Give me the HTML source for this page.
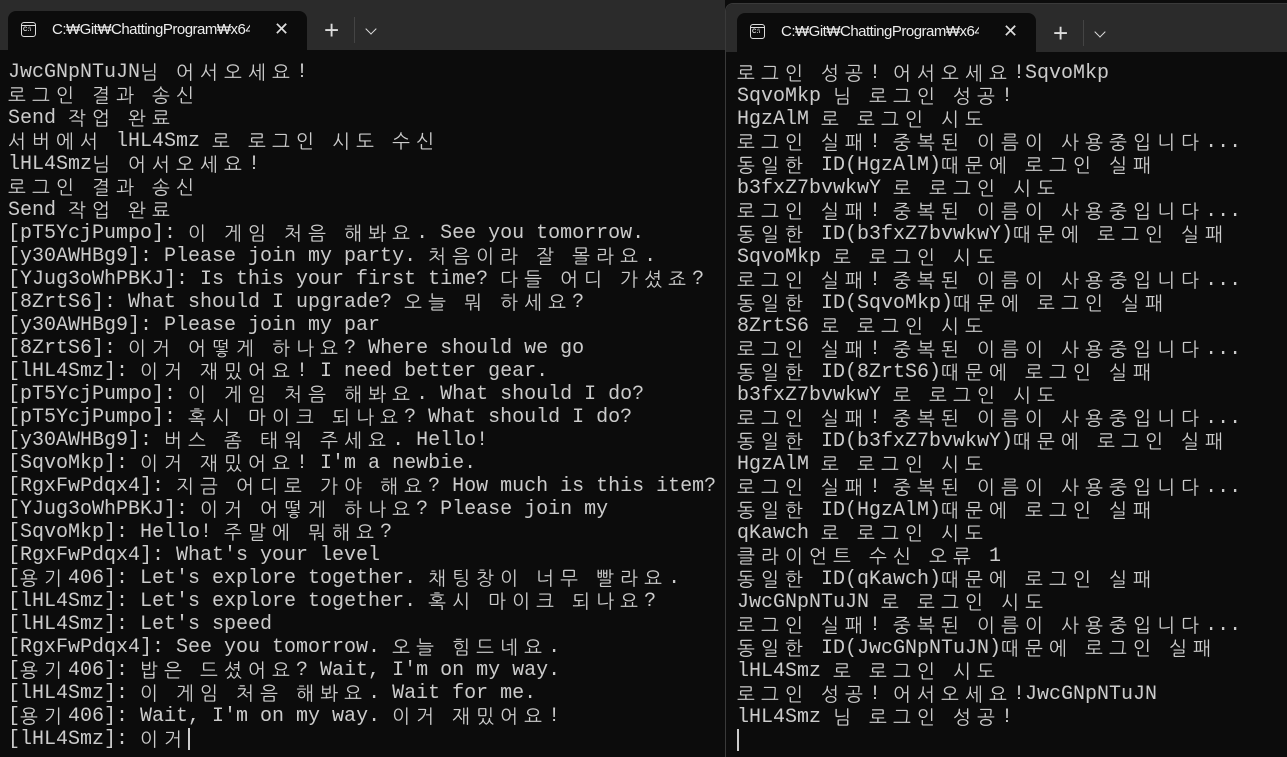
<!DOCTYPE html>
<html><head><meta charset="utf-8"><style>
html,body{margin:0;width:1287px;height:756px;overflow:hidden;background:#0c0c0c;}
.win{position:absolute;background:#0c0c0c;overflow:hidden;}
.bar{position:absolute;left:0;right:0;top:0;background:#2b2b2b;}
.tab{position:absolute;background:#0c0c0c;border-radius:8px 8px 0 0;height:39px;width:299px;}
.tab .ic{position:absolute;left:13px;top:11px;width:15px;height:15px;border:1.5px solid #ddd;border-radius:3px;box-sizing:border-box;}
.tab .ic:before{content:"";position:absolute;left:0;right:0;top:2px;border-top:1.5px solid #ddd;}
.tab .ic span{position:absolute;left:1px;top:4px;font:bold 6px "Liberation Sans",sans-serif;color:#ddd;}
.tab .t{position:absolute;left:44px;top:10px;font:15px "Liberation Sans",sans-serif;color:#eee;letter-spacing:-0.5px;white-space:nowrap;width:198px;overflow:hidden;}
.tab .x{position:absolute;left:266px;top:8px;font:18px "Liberation Sans",sans-serif;color:#ddd;}
.plus{position:absolute;font:26px "Liberation Sans",sans-serif;color:#ddd;}
.sep{position:absolute;width:1px;height:26px;background:#444;}
.chev{position:absolute;width:7px;height:7px;border-right:1.5px solid #ddd;border-bottom:1.5px solid #ddd;transform:rotate(45deg);}
pre{position:absolute;margin:0;font:20px/23px "Liberation Mono",monospace;color:#cccccc;white-space:pre;}
.k{display:inline-block;width:24px;height:23px;line-height:23px;vertical-align:top;font-family:"NanumGothic","Noto Sans CJK KR",sans-serif;font-size:19px;text-align:left;overflow:hidden;}
.cur{display:inline-block;width:2px;height:22px;background:#ccc;vertical-align:top;}
</style></head><body>
<div class="win" style="left:0;top:0;width:725px;height:756px;">
<div class="bar" style="height:50px;"></div>
<div class="tab" style="left:8px;top:11px;"><div class="ic"><span>C:\</span></div><div class="t">C:₩Git₩ChattingProgram₩x64</div><div class="x">✕</div></div>
<div class="plus" style="left:324px;top:15px;">+</div>
<div class="sep" style="left:354px;top:17px;"></div>
<div class="chev" style="left:367px;top:25px;"></div>
<pre style="left:8px;top:61px;">JwcGNpNTuJN님 어서오세요!
로그인 결과 송신
Send 작업 완료
서버에서 lHL4Smz 로 로그인 시도 수신
lHL4Smz님 어서오세요!
로그인 결과 송신
Send 작업 완료
[pT5YcjPumpo]: 이 게임 처음 해봐요. See you tomorrow.
[y30AWHBg9]: Please join my party. 처음이라 잘 몰라요.
[YJug3oWhPBKJ]: Is this your first time? 다들 어디 가셨죠?
[8ZrtS6]: What should I upgrade? 오늘 뭐 하세요?
[y30AWHBg9]: Please join my par
[8ZrtS6]: 이거 어떻게 하나요? Where should we go
[lHL4Smz]: 이거 재밌어요! I need better gear.
[pT5YcjPumpo]: 이 게임 처음 해봐요. What should I do?
[pT5YcjPumpo]: 혹시 마이크 되나요? What should I do?
[y30AWHBg9]: 버스 좀 태워 주세요. Hello!
[SqvoMkp]: 이거 재밌어요! I'm a newbie.
[RgxFwPdqx4]: 지금 어디로 가야 해요? How much is this item?
[YJug3oWhPBKJ]: 이거 어떻게 하나요? Please join my
[SqvoMkp]: Hello! 주말에 뭐해요?
[RgxFwPdqx4]: What's your level
[용기406]: Let's explore together. 채팅창이 너무 빨라요.
[lHL4Smz]: Let's explore together. 혹시 마이크 되나요?
[lHL4Smz]: Let's speed
[RgxFwPdqx4]: See you tomorrow. 오늘 힘드네요.
[용기406]: 밥은 드셨어요? Wait, I'm on my way.
[lHL4Smz]: 이 게임 처음 해봐요. Wait for me.
[용기406]: Wait, I'm on my way. 이거 재밌어요!
[lHL4Smz]: 이거<span class="cur"></span></pre>
</div>
<div class="win" style="left:725px;top:3px;width:562px;height:753px;border-left:1px solid #3a3a3a;border-top:1px solid #3a3a3a;border-radius:8px 0 0 0;">
<div class="bar" style="height:48px;"></div>
<div class="tab" style="left:11px;top:9px;"><div class="ic"><span>C:\</span></div><div class="t">C:₩Git₩ChattingProgram₩x64</div><div class="x">✕</div></div>
<div class="plus" style="left:327px;top:14px;">+</div>
<div class="sep" style="left:357px;top:16px;"></div>
<div class="chev" style="left:370px;top:24px;"></div>
<pre style="left:11px;top:58px;">로그인 성공! 어서오세요!SqvoMkp
SqvoMkp 님 로그인 성공!
HgzAlM 로 로그인 시도
로그인 실패! 중복된 이름이 사용중입니다...
동일한 ID(HgzAlM)때문에 로그인 실패
b3fxZ7bvwkwY 로 로그인 시도
로그인 실패! 중복된 이름이 사용중입니다...
동일한 ID(b3fxZ7bvwkwY)때문에 로그인 실패
SqvoMkp 로 로그인 시도
로그인 실패! 중복된 이름이 사용중입니다...
동일한 ID(SqvoMkp)때문에 로그인 실패
8ZrtS6 로 로그인 시도
로그인 실패! 중복된 이름이 사용중입니다...
동일한 ID(8ZrtS6)때문에 로그인 실패
b3fxZ7bvwkwY 로 로그인 시도
로그인 실패! 중복된 이름이 사용중입니다...
동일한 ID(b3fxZ7bvwkwY)때문에 로그인 실패
HgzAlM 로 로그인 시도
로그인 실패! 중복된 이름이 사용중입니다...
동일한 ID(HgzAlM)때문에 로그인 실패
qKawch 로 로그인 시도
클라이언트 수신 오류 1
동일한 ID(qKawch)때문에 로그인 실패
JwcGNpNTuJN 로 로그인 시도
로그인 실패! 중복된 이름이 사용중입니다...
동일한 ID(JwcGNpNTuJN)때문에 로그인 실패
lHL4Smz 로 로그인 시도
로그인 성공! 어서오세요!JwcGNpNTuJN
lHL4Smz 님 로그인 성공!
<span class="cur"></span></pre>
</div>
<script>
document.querySelectorAll('pre').forEach(function(p){
  var w=document.createTreeWalker(p,NodeFilter.SHOW_TEXT),ns=[],n;
  while(n=w.nextNode())ns.push(n);
  ns.forEach(function(t){
    var s=t.nodeValue;if(!/[\uAC00-\uD7A3]/.test(s))return;
    var f=document.createDocumentFragment(),buf='';
    for(var i=0;i<s.length;i++){var c=s[i];
      if(/[\uAC00-\uD7A3]/.test(c)){if(buf){f.appendChild(document.createTextNode(buf));buf='';}
        var sp=document.createElement('span');sp.className='k';sp.textContent=c;f.appendChild(sp);}
      else buf+=c;}
    if(buf)f.appendChild(document.createTextNode(buf));
    t.parentNode.replaceChild(f,t);
  });
});
</script>
</body></html>
